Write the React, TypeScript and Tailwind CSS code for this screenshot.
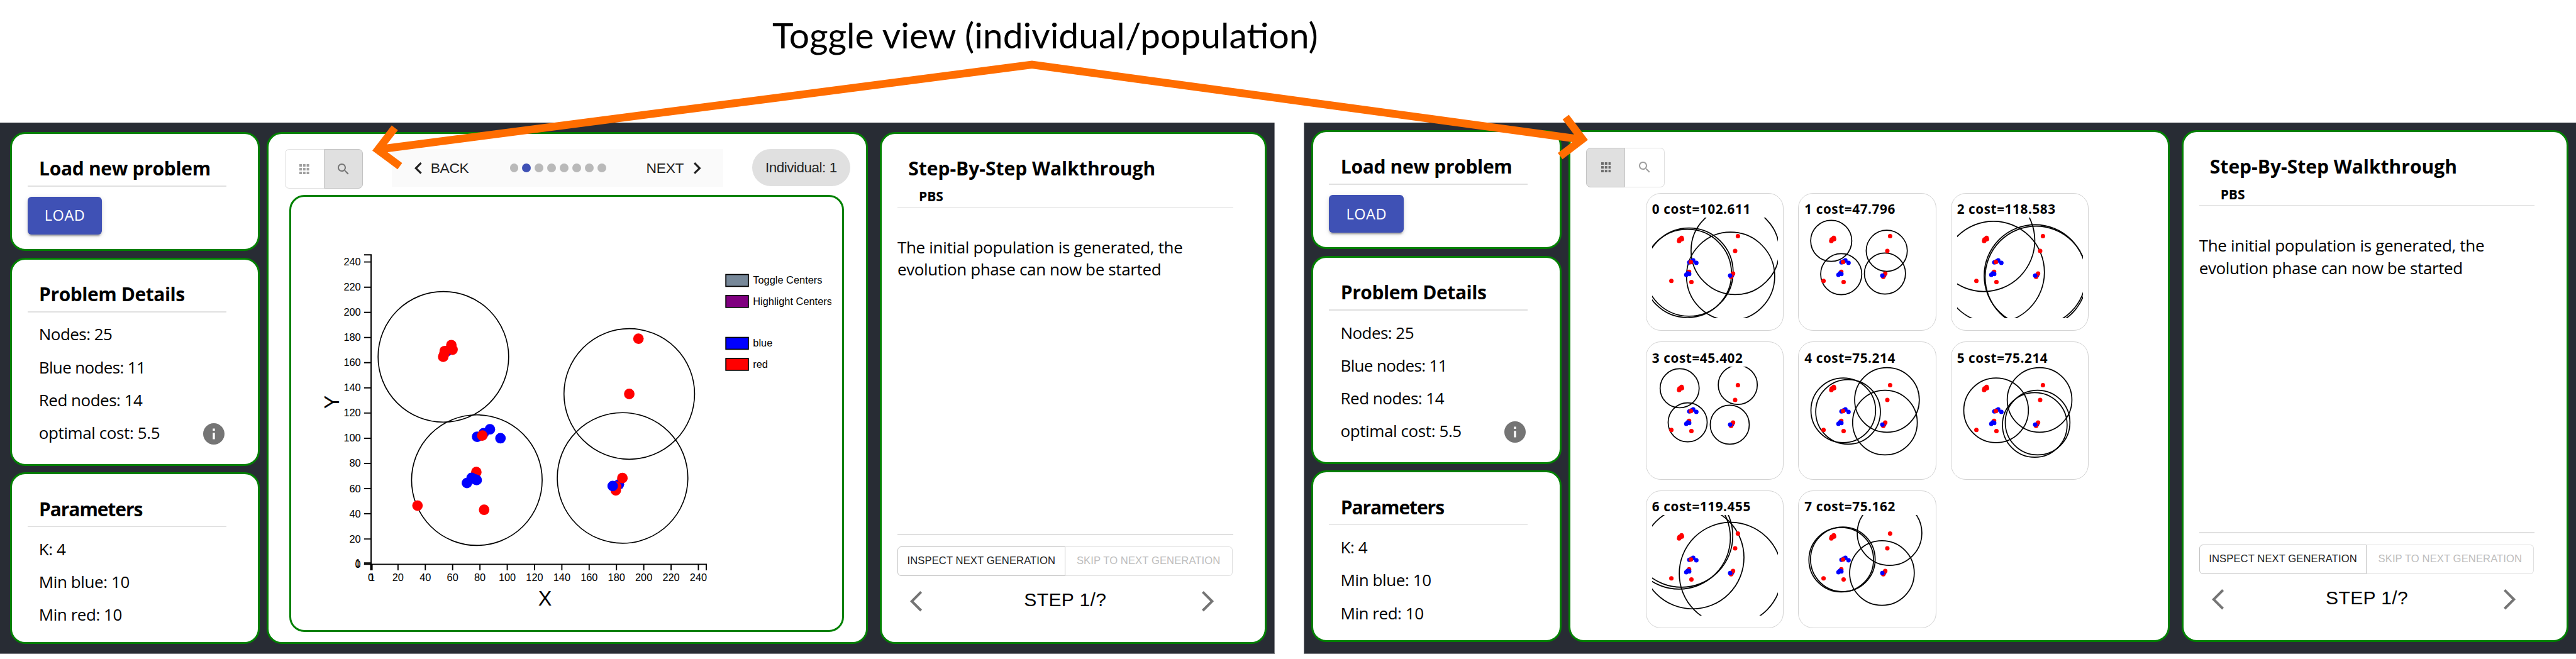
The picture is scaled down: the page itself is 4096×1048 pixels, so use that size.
import type { ReactNode } from "react";

type Pt = [number, number];

/* ---------- data ---------- */

const NODES: { c: "red" | "blue"; p: Pt }[] = [
  { c: "blue", p: [747, 585.5] },
  { c: "red", p: [753.5, 575.7] },
  { c: "red", p: [742.5, 585.7] },
  { c: "red", p: [755.5, 583.3] },
  { c: "red", p: [741.5, 591] },
  { c: "red", p: [739.9, 595.3] },
  { c: "red", p: [1065.8, 565] },
  { c: "red", p: [1050.5, 657.3] },
  { c: "blue", p: [796.5, 728.7] },
  { c: "blue", p: [807.5, 722.7] },
  { c: "blue", p: [817.9, 716.3] },
  { c: "red", p: [805.2, 726.7] },
  { c: "blue", p: [835.5, 731.3] },
  { c: "red", p: [795.2, 787.7] },
  { c: "blue", p: [787.4, 797.3] },
  { c: "blue", p: [793.2, 800] },
  { c: "blue", p: [795.8, 801] },
  { c: "blue", p: [779.5, 806] },
  { c: "red", p: [697, 843.7] },
  { c: "red", p: [808.2, 850.7] },
  { c: "blue", p: [1033.2, 808.3] },
  { c: "red", p: [1039, 797.7] },
  { c: "red", p: [1028, 818.3] },
  { c: "red", p: [1028.7, 812] },
  { c: "blue", p: [1022.8, 811] },
];

const CLUSTERS: Pt[] = [
  [740.2, 595.3],
  [796.1, 801.2],
  [1050.5, 657.3],
  [1039.3, 797.5],
];

const POPULATION: { cost: number; centers: Pt[] }[] = [
  { cost: 102.611, centers: [[61.6, 91], [58.9, 93.3], [138.6, 55], [131, 98]] },
  { cost: 47.796, centers: [[44.9, 38.8], [61.6, 94.5], [137.6, 55.5], [134.6, 93.5]] },
  { cost: 118.583, centers: [[60.6, 91.3], [44.5, 38.3], [130.2, 97], [131.8, 99.5]] },
  { cost: 45.402, centers: [[45.9, 36.2], [143, 30.6], [59.3, 93.1], [129.6, 97]] },
  { cost: 75.214, centers: [[65, 73], [73, 75.6], [138, 55.6], [134.6, 93.5]] },
  { cost: 75.214, centers: [[65, 73], [137.6, 55.6], [134.3, 93.5], [129.6, 97.4]] },
  { cost: 119.455, centers: [[48.9, 34.9], [44.9, 38], [67.6, 71], [131, 98]] },
  { cost: 75.162, centers: [[61.6, 74.7], [64.3, 74], [142.3, 30.3], [129.6, 96.9]] },
];

const TICKS = [0, 20, 40, 60, 80, 100, 120, 140, 160, 180, 200, 220, 240];
const xOf = (v: number) => 618.9 + v * 2.279;
const yOf = (v: number) => 941.4 - v * 2.1017;

/* ---------- building blocks ---------- */

function Card({ className, children }: { className: string; children?: ReactNode }) {
  return <section className={`flex shrink-0 flex-col rounded-[24px] border-3 border-[#008000] bg-white ${className}`}>{children}</section>;
}

function Title({ className = "", children }: { className?: string; children: ReactNode }) {
  return <h2 className={`h-10 whitespace-nowrap text-[30px] leading-[42px] font-bold ${className}`}>{children}</h2>;
}

function Row({ className = "", children }: { className?: string; children: ReactNode }) {
  return <p className={`h-[52.2px] whitespace-nowrap text-[26px] leading-[53.2px] ${className}`}>{children}</p>;
}

function GridIcon() {
  return (
    <svg viewBox="0 0 16.4 17" className="h-[16.2px] w-[15.6px] fill-current">
      {[0, 1, 2].map((r) => [0, 1, 2].map((c) => <rect key={`${r}${c}`} x={c * 6.1} y={r * 6.4} width="4.2" height="4.2" />))}
    </svg>
  );
}

function SearchIcon() {
  return (
    <svg viewBox="0 0 24 24" className="size-[24px] fill-current">
      <path d="M15.5 14h-.79l-.28-.27C15.41 12.59 16 11.11 16 9.5 16 5.91 13.09 3 9.5 3S3 5.91 3 9.5 5.91 16 9.5 16c1.61 0 3.09-.59 4.23-1.57l.27.28v.79l5 4.99L20.49 19l-4.99-5zm-6 0C7.01 14 5 11.99 5 9.5S7.01 5 9.5 5 14 7.01 14 9.5 11.99 14 9.5 14z" />
    </svg>
  );
}

function Toggle({ active }: { active: "grid" | "single" }) {
  const grid = active === "grid";
  return (
    <div className="flex h-[63px] w-[124.6px] shrink-0">
      <button
        className={`flex w-[62px] items-center justify-center rounded-l-[7px] border ${
          grid ? "border-[#c3c3c3] bg-[#e0e0e0] text-[#6b6b6b]" : "border-r-0 border-[#e0e0e0] text-[#9e9e9e]"
        }`}
      >
        <GridIcon />
      </button>
      <button
        className={`flex flex-1 items-center justify-center rounded-r-[7px] border ${
          grid ? "border-l-0 border-[#e0e0e0] text-[#9e9e9e]" : "border-[#c3c3c3] bg-[#e0e0e0] text-[#757575]"
        }`}
      >
        <SearchIcon />
      </button>
    </div>
  );
}

function Sidebar() {
  return (
    <div className="flex w-[397.4px] shrink-0 flex-col font-['Open_Sans',sans-serif] text-black">
      <Card className="h-[189px] pt-[34.6px] pl-[25.1px]">
        <Title className="pl-[18.3px] tracking-[-0.32px]">Load new problem</Title>
        <div className="mt-2 h-[2px] w-[316px] bg-[#e0e0e0]" />
        <button className="mt-[16px] flex h-[60px] w-[118.6px] items-center justify-center rounded-[6px] bg-[#3f51b5] text-[23.5px] tracking-[0.5px] text-white shadow-[0_5px_2px_-3px_rgba(0,0,0,0.2),0_3px_3px_0_rgba(0,0,0,0.14),0_2px_8px_0_rgba(0,0,0,0.12)]">
          LOAD
        </button>
      </Card>
      <Card className="mt-[11px] h-[331px] pt-[34.6px] pl-[25.1px]">
        <Title className="pl-[18.3px] tracking-[-0.45px]">Problem Details</Title>
        <div className="mt-2 h-[2px] w-[316px] bg-[#e0e0e0]" />
        <div className="mt-[8.4px] w-[313px] pl-[18px]">
          <Row className="tracking-[-0.55px]">Nodes: 25</Row>
          <Row className="tracking-[-0.65px]">Blue nodes: 11</Row>
          <Row className="tracking-[-0.5px]">Red nodes: 14</Row>
          <div className="flex items-center justify-between">
            <Row className="tracking-[-0.4px]">optimal cost: 5.5</Row>
            <svg viewBox="2 2 20 20" className="mt-[3px] size-[34px] fill-[#757575]">
              <path d="M12 2C6.48 2 2 6.48 2 12s4.48 10 10 10 10-4.48 10-10S17.52 2 12 2zm1 15h-2v-6h2v6zm0-8h-2V7h2v2z" />
            </svg>
          </div>
        </div>
      </Card>
      <Card className="mt-[10.2px] h-[273.6px] pt-[35.4px] pl-[25.1px]">
        <Title className="pl-[18.3px] tracking-[-1.1px]">Parameters</Title>
        <div className="mt-2 h-px w-[316px] bg-[#dcdcdc]" />
        <div className="mt-[9px] pl-[18px]">
          <Row className="tracking-[-0.4px]">K: 4</Row>
          <Row className="tracking-[-0.4px]">Min blue: 10</Row>
          <Row className="tracking-[-0.45px]">Min red: 10</Row>
        </div>
      </Card>
    </div>
  );
}

function Walkthrough() {
  return (
    <Card className="h-[814.4px] w-[614.6px] pt-[34.6px] pb-[48.4px] pl-[24.6px] font-['Open_Sans',sans-serif] text-black">
      <Title className="pl-[17.2px] tracking-[0px]">Step-By-Step Walkthrough</Title>
      <h3 className="mt-[11px] pl-[34px] text-[21px] leading-7 font-bold">PBS</h3>
      <div className="mt-[3.2px] h-px w-[533.6px] shrink-0 bg-[#dcdcdc]" />
      <p className="mt-[46px] text-[26px] leading-[35.1px] whitespace-nowrap">
        <span className="tracking-[-0.31px]">The initial population is generated, the</span>
        <br />
        <span className="tracking-[-0.37px]">evolution phase can now be started</span>
      </p>
      <div className="mt-auto h-[2px] w-[533.6px] shrink-0 bg-[#e0e0e0]" />
      <div className="mt-[17.7px] flex h-[47.2px] w-[532.6px] shrink-0 font-['Liberation_Sans',sans-serif] text-[16.6px] whitespace-nowrap">
        <button className="flex flex-1 items-center justify-center rounded-l-[6px] border border-[#c4c4c4] pb-px tracking-[0.1px] text-[#212121]">INSPECT NEXT GENERATION</button>
        <button className="flex flex-1 items-center justify-center rounded-r-[6px] border border-l-0 border-[#e0e0e0] pb-px tracking-[0.1px] text-[#bdbdbd]">SKIP TO NEXT GENERATION</button>
      </div>
      <div className="mt-[24px] flex h-[32.4px] w-[532.6px] shrink-0 items-center justify-between pr-[29.3px] pl-[20.5px] font-['Liberation_Sans',sans-serif]">
        <svg viewBox="6 2 11.77 20" className="h-[32.4px] w-[19.1px] fill-[#757575]">
          <path d="M17.77 3.77L16 2 6 12l10 10 1.77-1.77L9.54 12z" />
        </svg>
        <span className="pb-[5px] pl-[10px] text-[30px] leading-8 tracking-[0.4px]">STEP 1/?</span>
        <svg viewBox="6.23 2 11.77 20" className="h-[32.4px] w-[19.1px] fill-[#757575]">
          <path d="M6.23 20.23L8 22l10-10L8 2 6.23 3.77 14.46 12z" />
        </svg>
      </div>
    </Card>
  );
}

function Stepper() {
  return (
    <div className="ml-[45.8px] flex h-[59.7px] w-[526.7px] shrink-0 items-center bg-[#fafafa] pl-[35.9px] text-[22.8px] whitespace-nowrap text-[#212121]">
      <svg viewBox="8 6 7.41 12" className="h-[18.8px] w-[11.7px] fill-current">
        <path d="M15.41 16.59L10.83 12l4.58-4.59L14 6l-6 6 6 6z" />
      </svg>
      <span className="ml-[14px] w-[61.4px] tracking-[-0.3px]">BACK</span>
      <div className="ml-[64.5px] flex gap-[6.36px]">
        {POPULATION.map((_, i) => (
          <i key={i} className={`size-[13.6px] rounded-full ${i === 1 ? "bg-[#3f51b5]" : "bg-[#b9b9b9]"}`} />
        ))}
      </div>
      <span className="ml-[63.8px] w-[75.6px] tracking-[-0.3px]">NEXT</span>
      <svg viewBox="8.59 6 7.41 12" className="h-[18.8px] w-[11.7px] fill-current">
        <path d="M8.59 16.59L13.17 12 8.59 7.41 10 6l6 6-6 6z" />
      </svg>
    </div>
  );
}

function Chart() {
  const legend = [
    { y: 457.9, fill: "#778899", t: "Toggle Centers" },
    { y: 493, fill: "#800080", t: "Highlight Centers" },
    { y: 562.9, fill: "#0000ff", t: "blue" },
    { y: 598, fill: "#ff0000", t: "red" },
  ];
  return (
    <svg viewBox="486.2 328.2 919.7 723.6" className="size-full" fontFamily="'Liberation Sans', sans-serif" fontSize="17.2">
      <g stroke="#000" strokeWidth="2" fill="none">
        <path d="M607.8 425H619.5V941.7H607.8" />
        <path d="M619.5 951.7V941.7H1179V951.7" />
        <path d={`M607.8 ${yOf(1)}H619.5M${xOf(1)} 941.7V951.7`} />
        {TICKS.map((t) => (
          <path key={t} d={`M607.8 ${yOf(t)}H619.5M${xOf(t)} 941.7V951.7`} />
        ))}
      </g>
      {TICKS.map((t) => (
        <g key={t}>
          <text x="602.4" y={yOf(t) + 5.8} textAnchor="end">{t}</text>
          <text x={xOf(t)} y="969.4" textAnchor="middle">{t}</text>
        </g>
      ))}
      <text x="602.4" y={yOf(1) + 5.8} textAnchor="end">1</text>
      <text x={xOf(1)} y="969.4" textAnchor="middle">1</text>
      <text x="909.7" y="1010.7" textAnchor="middle" fontSize="34">X</text>
      <text transform="translate(566 671) rotate(-90)" textAnchor="middle" fontSize="34">Y</text>
      {CLUSTERS.map(([x, y], i) => (
        <circle key={i} cx={x} cy={y} r="109" fill="none" stroke="#000" strokeWidth="1.75" />
      ))}
      {NODES.map((n, i) => (
        <circle key={i} cx={n.p[0]} cy={n.p[1]} r="8.8" fill={n.c} />
      ))}
      <svg x="1200" y="440" width="187.8" height="200" viewBox="1200 440 187.8 200">
        {legend.map((l) => (
          <g key={l.t}>
            <rect x="1211.7" y={l.y} width="37.6" height="19.8" fill={l.fill} stroke="#000" strokeWidth="1.8" />
            <text x="1257" y={l.y + 15.4}>{l.t}</text>
          </g>
        ))}
      </svg>
    </svg>
  );
}

function MiniPlot({ cost, centers }: { cost: number; centers: Pt[] }) {
  return (
    <svg viewBox="0 0 210.3 168" className="h-[160px] w-[200.3px]">
      {centers.map(([x, y], i) => (
        <circle key={i} cx={x} cy={y} r={cost * 0.7176} fill="none" stroke="#000" strokeWidth="1.8" />
      ))}
      {NODES.map((n, i) => (
        <circle key={i} cx={32.1 + (n.p[0] - 697) / 3.32} cy={105.7 + (n.p[1] - 843.7) / 3.73} r="3.7" fill={n.c} />
      ))}
    </svg>
  );
}

function IndividualView() {
  return (
    <Card className="ml-[11.2px] h-[814.4px] w-[956px] font-['Liberation_Sans',sans-serif]">
      <div className="flex h-[88px] pt-[24.9px] pl-[25.4px]">
        <Toggle active="single" />
        <Stepper />
        <div className="ml-[46.3px] flex h-[59px] w-[155.6px] items-center justify-center rounded-full bg-[#e0e0e0] pb-px text-[22.4px] tracking-[-0.45px] whitespace-nowrap text-[#262626]">
          Individual: 1
        </div>
      </div>
      <div className="mt-[9px] ml-[32.8px] h-[695.3px] w-[882.2px] rounded-[24px] border-3 border-[#008000]">
        <Chart />
      </div>
    </Card>
  );
}

function PopulationView() {
  return (
    <Card className="ml-[11.2px] h-[814.4px] w-[956px]">
      <div className="flex h-[88px] pt-[24.9px] pl-[25.4px]">
        <Toggle active="grid" />
      </div>
      <div className="mt-[9px] ml-[119.8px] grid grid-cols-[repeat(3,219.5px)] gap-x-[22.9px] gap-y-[17px] font-['Open_Sans',sans-serif]">
        {POPULATION.map((p, i) => (
          <div key={i} className="h-[219.6px] rounded-[24px] border border-[#d3d3d3] pt-[10.3px] pl-[9.1px]">
            <h4 className="h-7 text-[20.7px] leading-7 font-bold tracking-[0.6px] whitespace-nowrap">
              {i} cost={p.cost}
            </h4>
            <MiniPlot {...p} />
          </div>
        ))}
      </div>
    </Card>
  );
}

export default function App() {
  return (
    <main className="relative h-[1048px] w-[4096px] overflow-hidden bg-white text-black">
      <header className="h-[195px] pt-[15px] pl-[1228px]">
        <h1 className="font-[Lato,sans-serif] text-[57px] leading-[80px] whitespace-nowrap">Toggle view (individual/population)</h1>
      </header>
      <div className="flex h-[844.5px] justify-between">
        <div className="flex w-[2027px] border-r border-b border-[#808287] bg-[#282c34] pt-[14.5px] pl-[15.7px]">
          <Sidebar />
          <IndividualView />
          <div className="ml-[19.1px]">
            <Walkthrough />
          </div>
        </div>
        <div className="flex w-[2023px] border-b border-l border-[#808287] bg-[#282c34] pt-[11.7px] pl-[11.4px]">
          <Sidebar />
          <PopulationView />
          <div className="ml-[19.1px]">
            <Walkthrough />
          </div>
        </div>
      </div>
      <svg viewBox="0 0 4300 1100" className="pointer-events-none absolute inset-0 h-[1048px] w-[4096px]" fill="none" stroke="#ff6d00" strokeWidth="13">
        <path d="M630.5 249.5L1722.6 107.8L2641 232.8" />
        <path d="M659 213.3L630.7 250L667.5 277.3" />
        <path d="M2613.6 195.5L2641.5 232.3L2604.3 260.5" />
      </svg>
    </main>
  );
}
